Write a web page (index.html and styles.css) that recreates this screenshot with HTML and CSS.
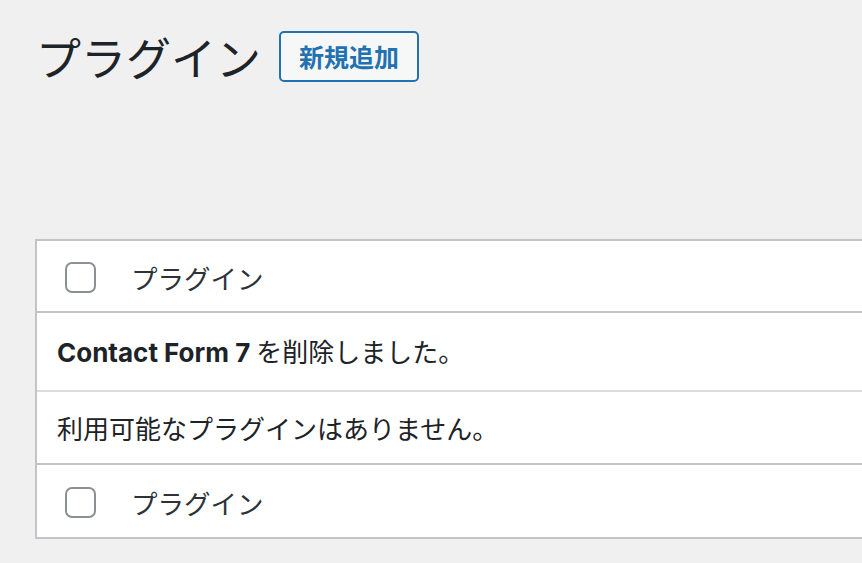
FILE: index.html
```html
<!DOCTYPE html>
<html lang="ja">
<head>
<meta charset="utf-8">
<title>プラグイン</title>
<link rel="stylesheet" href="styles.css">
</head>
<body>
<div class="wrap">
  <div class="page-head">
    <h1 class="page-title">プラグイン</h1>
    <a class="add-new" href="#">新規追加</a>
  </div>
  <div class="list">
    <div class="row row-head">
      <span class="check"></span>
      <span class="col-name">プラグイン</span>
    </div>
    <div class="row row-msg">
      <span class="msg"><strong class="latin">Contact Form 7</strong> を削除しました。</span>
    </div>
    <div class="row row-empty">
      <span class="msg">利用可能なプラグインはありません。</span>
    </div>
    <div class="row row-foot">
      <span class="check"></span>
      <span class="col-name">プラグイン</span>
    </div>
  </div>
</div>
</body>
</html>
```
FILE: styles.css
```css
html, body {
  margin: 0;
  padding: 0;
  background: #f0f0f1;
  overflow: hidden;
}
body {
  font-family: Inter, "Noto Sans CJK JP", sans-serif;
  color: #1d2327;
}
.wrap {
  padding: 0 0 0 35px;
  overflow: hidden;
}
.page-head {
  display: flex;
  align-items: center;
  gap: 18px;
  height: 113px;
  padding-left: 1px;
}
.page-title {
  margin: 0;
  font-family: "Noto Sans CJK JP", sans-serif;
  font-size: 45px;
  font-weight: 400;
  line-height: 1;
  color: #1d2327;
}
.add-new {
  display: flex;
  align-items: center;
  justify-content: center;
  box-sizing: border-box;
  width: 140px;
  height: 51px;
  border: 2px solid #2271b1;
  border-radius: 5px;
  background: #f6f7f7;
  color: #2271b1;
  text-decoration: none;
  font-family: "Noto Sans CJK JP", sans-serif;
  font-weight: 700;
  font-size: 25px;
  line-height: 1;
}
.list {
  margin-top: 126px;
  width: 1000px;
  background: #fff;
  border: 2px solid #c3c4c7;
  box-sizing: border-box;
}
.row {
  display: flex;
  align-items: center;
  box-sizing: border-box;
  font-family: Inter, "Noto Sans CJK JP", sans-serif;
  font-size: 26px;
}
.row-head {
  height: 72px;
  border-bottom: 2px solid #c3c4c7;
  padding-left: 28px;
  padding-top: 2px;
}
.row-msg {
  height: 79px;
  border-bottom: 2px solid #dcdcde;
  padding-left: 20px;
  padding-bottom: 3px;
}
.row-empty {
  height: 73px;
  border-bottom: 2px solid #c3c4c7;
  padding-left: 20px;
}
.row-foot {
  height: 72px;
  padding-left: 28px;
  padding-top: 3px;
}
.check {
  width: 31px;
  height: 31px;
  box-sizing: border-box;
  border: 2px solid #8c8f94;
  border-radius: 7px;
  background: #fff;
  flex: none;
}
.col-name {
  margin-left: 35px;
  color: #2c3338;
  font-family: "Noto Sans CJK JP", sans-serif;
  font-size: 26.5px;
}
.msg {
  color: #1d2327;
  font-family: "Noto Sans CJK JP", sans-serif;
}
.latin {
  font-family: Inter, sans-serif;
  font-weight: 700;
}
```
